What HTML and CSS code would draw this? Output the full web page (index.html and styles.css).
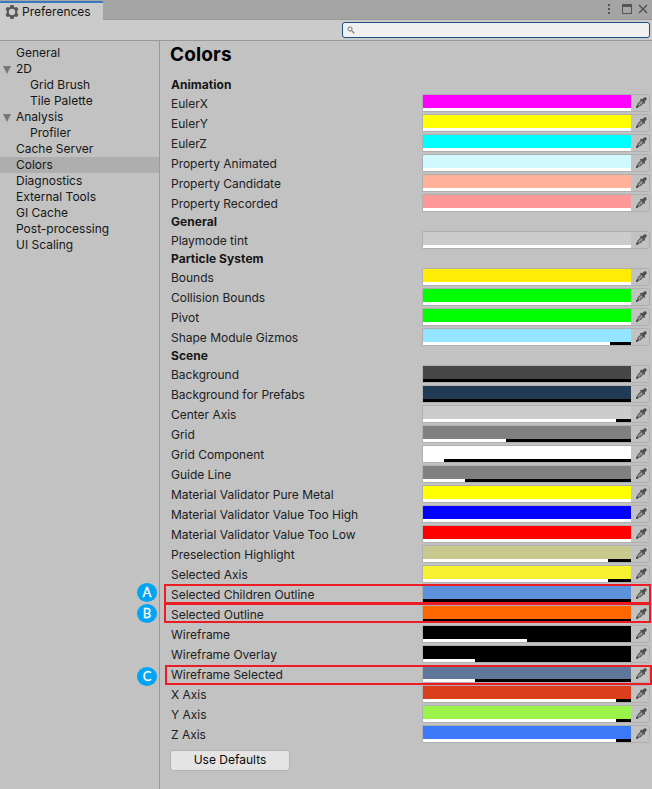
FILE: index.html
```html
<!DOCTYPE html>
<html lang="en">
<head>
<meta charset="utf-8">
<title>Preferences</title>
<link rel="stylesheet" href="styles.css">
</head>
<body>
<svg class="defs" width="0" height="0" aria-hidden="true">
  <symbol id="dropper" viewBox="0 0 12 12">
    <path d="M5.600 4L2.300 7.300L1.700 9.100L0.600 10.600L1.300 11.300L2.900 9.900L4.600 9.500L7.800 6.300" fill="#999" stroke="#555" stroke-width="1.200"/>
    <path d="M0 10.200L1.500 9.500L2.500 10.500L1.800 12H0Z" fill="#555"/>
    <path d="M4.200 2.800L5.300 2L6.800 2.500L8.800 0.600Q9.800 0 10.800 0.200Q12 1 11.600 2.700L9.500 4.900L9.900 6.500L9 7.600Z" fill="#4e4e4e"/>
  </symbol>
</svg>
<div class="window">
  <header class="titlebar">
    <div class="tab">
      <svg class="gear" width="14" height="14" viewBox="0 0 14 14"><path fill="#555" fill-rule="evenodd" d="M5.500 0h3l.5 1.900 1 .6 2-.6 1.500 2.600L12.200 5.800v2.400l1.300 1.300L12 12.100l-2-.6-1 .6-.5 1.900h-3L5 12.100l-1-.6-2 .6L.5 9.500l1.300-1.300V5.800L.5 4.500 2 1.900l2 .6 1-.6zM7 3.800a3.200 3.200 0 1 0 0 6.400 3.200 3.200 0 0 0 0-6.400z"/></svg>
      <span>Preferences</span>
    </div>
    <svg class="controls" width="44" height="12" viewBox="0 0 44 12">
      <path fill="#555" d="M2 1h2v2H2zM2 5h2v2H2zM2 9h2v2H2z"/>
      <path fill="#555" fill-rule="evenodd" d="M16 1h10v10H16zM17 4v6h8V4z"/>
      <path d="M33 2l8 8M41 2l-8 8" stroke="#555" stroke-width="1.6"/>
    </svg>
  </header>
  <div class="toolbar">
    <div class="search"><svg width="8" height="8" viewBox="0 0 8 8"><circle cx="3" cy="3" r="2.1" fill="none" stroke="#777" stroke-width="1"/><path d="M4.600 4.600L7.300 7.300" stroke="#777" stroke-width="1.200"/></svg></div>
  </div>
  <div class="body">
    <nav class="sidebar">
      <div class="item">General</div>
      <div class="item parent">2D</div>
      <div class="item child">Grid Brush</div>
      <div class="item child">Tile Palette</div>
      <div class="item parent">Analysis</div>
      <div class="item child">Profiler</div>
      <div class="item">Cache Server</div>
      <div class="item selected">Colors</div>
      <div class="item">Diagnostics</div>
      <div class="item">External Tools</div>
      <div class="item">GI Cache</div>
      <div class="item">Post-processing</div>
      <div class="item">UI Scaling</div>
    </nav>
    <main class="content">
      <h1>Colors</h1>
      <h2>Animation</h2>
      <div class="row"><label>EulerX</label><div class="field" style="--c:#ff00ff;--a:208px"><i></i><svg><use href="#dropper"/></svg></div></div>
      <div class="row"><label>EulerY</label><div class="field" style="--c:#ffff00;--a:208px"><i></i><svg><use href="#dropper"/></svg></div></div>
      <div class="row"><label>EulerZ</label><div class="field" style="--c:#00ffff;--a:208px"><i></i><svg><use href="#dropper"/></svg></div></div>
      <div class="row"><label>Property Animated</label><div class="field" style="--c:#d1f7ff;--a:208px"><i></i><svg><use href="#dropper"/></svg></div></div>
      <div class="row"><label>Property Candidate</label><div class="field" style="--c:#ffb299;--a:208px"><i></i><svg><use href="#dropper"/></svg></div></div>
      <div class="row"><label>Property Recorded</label><div class="field" style="--c:#ff9999;--a:208px"><i></i><svg><use href="#dropper"/></svg></div></div>
      <h2>General</h2>
      <div class="row"><label>Playmode tint</label><div class="field" style="--c:#cccccc;--a:208px"><i></i><svg><use href="#dropper"/></svg></div></div>
      <h2>Particle System</h2>
      <div class="row"><label>Bounds</label><div class="field" style="--c:#ffeb04;--a:208px"><i></i><svg><use href="#dropper"/></svg></div></div>
      <div class="row"><label>Collision Bounds</label><div class="field" style="--c:#00ff00;--a:208px"><i></i><svg><use href="#dropper"/></svg></div></div>
      <div class="row"><label>Pivot</label><div class="field" style="--c:#00ff00;--a:208px"><i></i><svg><use href="#dropper"/></svg></div></div>
      <div class="row"><label>Shape Module Gizmos</label><div class="field" style="--c:#94e5ff;--a:187px"><i></i><svg><use href="#dropper"/></svg></div></div>
      <h2>Scene</h2>
      <div class="row"><label>Background</label><div class="field" style="--c:#474747;--a:0px"><i></i><svg><use href="#dropper"/></svg></div></div>
      <div class="row"><label>Background for Prefabs</label><div class="field" style="--c:#213b54;--a:0px"><i></i><svg><use href="#dropper"/></svg></div></div>
      <div class="row"><label>Center Axis</label><div class="field" style="--c:#cccccc;--a:193px"><i></i><svg><use href="#dropper"/></svg></div></div>
      <div class="row"><label>Grid</label><div class="field" style="--c:#808080;--a:83px"><i></i><svg><use href="#dropper"/></svg></div></div>
      <div class="row"><label>Grid Component</label><div class="field" style="--c:#ffffff;--a:21px"><i></i><svg><use href="#dropper"/></svg></div></div>
      <div class="row"><label>Guide Line</label><div class="field" style="--c:#808080;--a:42px"><i></i><svg><use href="#dropper"/></svg></div></div>
      <div class="row"><label>Material Validator Pure Metal</label><div class="field" style="--c:#ffff00;--a:208px"><i></i><svg><use href="#dropper"/></svg></div></div>
      <div class="row"><label>Material Validator Value Too High</label><div class="field" style="--c:#0000ff;--a:208px"><i></i><svg><use href="#dropper"/></svg></div></div>
      <div class="row"><label>Material Validator Value Too Low</label><div class="field" style="--c:#ff0000;--a:208px"><i></i><svg><use href="#dropper"/></svg></div></div>
      <div class="row"><label>Preselection Highlight</label><div class="field" style="--c:#c9c88f;--a:185px"><i></i><svg><use href="#dropper"/></svg></div></div>
      <div class="row"><label>Selected Axis</label><div class="field" style="--c:#f6f232;--a:185px"><i></i><svg><use href="#dropper"/></svg></div></div>
      <div class="row"><label>Selected Children Outline</label><div class="field" style="--c:#5e91db;--a:0px"><i></i><svg><use href="#dropper"/></svg></div><div class="callout callout-a"><b>A</b></div></div>
      <div class="row"><label>Selected Outline</label><div class="field" style="--c:#ff6600;--a:0px"><i></i><svg><use href="#dropper"/></svg></div><div class="callout callout-b"><b>B</b></div></div>
      <div class="row"><label>Wireframe</label><div class="field" style="--c:#000000;--a:104px"><i></i><svg><use href="#dropper"/></svg></div></div>
      <div class="row"><label>Wireframe Overlay</label><div class="field" style="--c:#000000;--a:52px"><i></i><svg><use href="#dropper"/></svg></div></div>
      <div class="row"><label>Wireframe Selected</label><div class="field" style="--c:#5e779b;--a:52px"><i></i><svg><use href="#dropper"/></svg></div><div class="callout callout-c"><b>C</b></div></div>
      <div class="row"><label>X Axis</label><div class="field" style="--c:#db3e1d;--a:193px"><i></i><svg><use href="#dropper"/></svg></div></div>
      <div class="row"><label>Y Axis</label><div class="field" style="--c:#9af348;--a:193px"><i></i><svg><use href="#dropper"/></svg></div></div>
      <div class="row"><label>Z Axis</label><div class="field" style="--c:#3a7af8;--a:193px"><i></i><svg><use href="#dropper"/></svg></div></div>
      <button>Use Defaults</button>
    </main>
  </div>
</div>
</body>
</html>
```

FILE: styles.css
```css
* { box-sizing: border-box; }
body {
  margin: 0;
  background: #c2c2c2;
  color: #161616;
  font: 12px/16px Inter, "Liberation Sans", sans-serif;
}
.defs { display: block; }
.window { height: 789px; display: flex; flex-direction: column; overflow: hidden; }
.titlebar {
  height: 20px;
  flex: none;
  display: flex;
  justify-content: space-between;
  align-items: flex-start;
  background: #a5a5a5;
  border-bottom: 1px solid #999;
}
.tab {
  width: 103px;
  height: 20px;
  margin-top: 1px;
  border-top: 2px solid #3a79bb;
  border-radius: 1px 1px 0 0;
  background: #cbcbcb;
  display: flex;
  align-items: center;
  gap: 3px;
  padding-left: 5px;
}
.controls { margin: 3px 2px 0 0; }
.toolbar {
  height: 21px;
  flex: none;
  background: #cbcbcb;
  border-bottom: 1px solid #999;
  padding: 2px 2px 0 342px;
}
.search {
  height: 16px;
  border: 1px solid #1d5087;
  border-radius: 3px;
  background: #f0f0f0;
  display: flex;
  align-items: center;
  padding-left: 4px;
}
.body { flex: 1; display: flex; min-height: 0; }
.sidebar { width: 160px; flex: none; border-right: 1px solid #999; padding-top: 4px; }
.item { height: 16px; padding-left: 16px; }
.child { padding-left: 30px; }
.parent { display: flex; align-items: center; padding-left: 3px; gap: 4px; }
.parent::before {
  content: "";
  border: solid transparent;
  border-width: 8px 4.5px 0;
  border-top-color: #777;
  margin: 2px 1px 0 0;
}
.selected { background: #aeaeae; }
.content { flex: 1; padding: 2px 2px 0 11px; }
h1 { margin: 0 0 11px -1px; font-size: 19px; line-height: 23px; height: 23px; font-weight: 700; letter-spacing: 0.15px; color: #000; }
h2 { margin: 0; height: 17px; font-size: 12px; line-height: 16px; font-weight: 700; letter-spacing: 0.05px; }
.row { height: 20px; display: grid; grid-template-columns: 251px 228px; position: relative; }
.row label { line-height: 20px; white-space: nowrap; color: #202020; letter-spacing: -0.02px; }
.field {
  height: 18px;
  border: 1px solid #afafaf;
  border-radius: 1px 3px 3px 1px;
  display: flex;
}
.field i {
  width: 208px;
  background:
    linear-gradient(#fff, #fff) 0 13px / var(--a) 3px no-repeat,
    linear-gradient(#000, #000) 0 13px / 208px 3px no-repeat,
    var(--c);
}
.field svg { width: 11px; height: 11px; margin: 2px 0 0 5px; }
.callout { position: absolute; left: -7px; width: 487px; height: 20px; border: 2px solid #ed1c24; }
.callout-a { top: -1px; }
.callout-b { top: -2px; }
.callout-c { top: 0; left: -6px; }
.callout b {
  position: absolute;
  left: -29px;
  top: -3px;
  width: 20px;
  height: 19px;
  border-radius: 50%;
  background: #03a4f4;
  color: #fff;
  font: 400 13px/19px Lato, sans-serif;
  -webkit-text-stroke: 0.3px #fff;
  text-align: center;
}
.callout-b b { top: -1px; }
.callout-c b { left: -30px; top: 0; }
button {
  display: block;
  width: 120px;
  height: 21px;
  margin: 5px 0 0 -1px;
  padding: 0 0 1px;
  border: 1px solid #b2b2b2;
  border-radius: 3px;
  background: #e4e4e4;
  color: #090909;
  font: inherit;
}
```
